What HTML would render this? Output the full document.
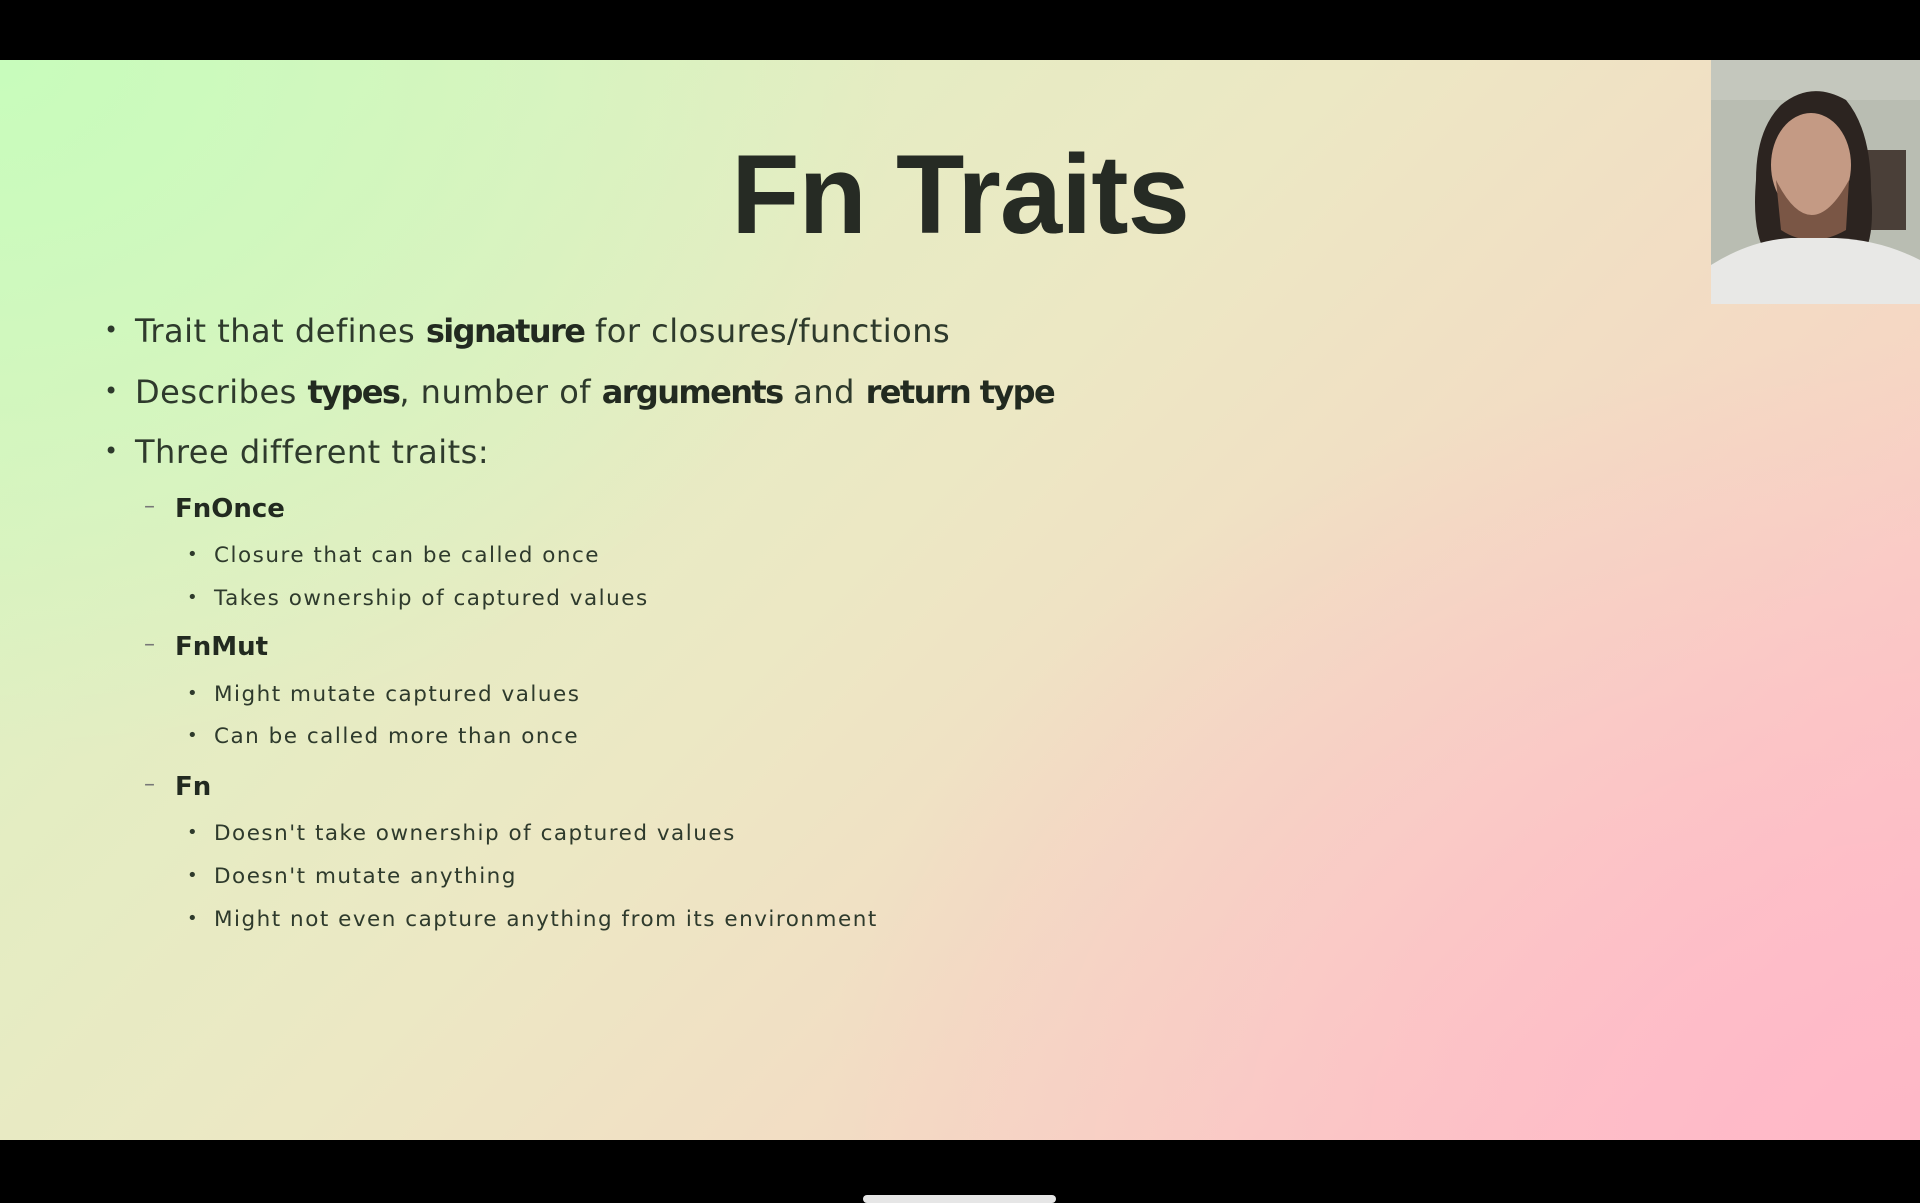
<!DOCTYPE html>
<html><head><meta charset="utf-8"><style>
html,body{margin:0;padding:0;width:1920px;height:1200px;background:#000;overflow:hidden;font-family:"DejaVu Sans","Liberation Sans",sans-serif;color:#2e3a2c}
#slide{position:absolute;left:0;top:60px;width:1920px;height:1080px;
background:
radial-gradient(ellipse 900px 700px at 0% 0%, rgba(200,252,188,1), rgba(200,252,188,0)),
radial-gradient(ellipse 1100px 800px at 100% 100%, rgba(255,184,200,1), rgba(255,188,200,0)),
linear-gradient(135deg,#d8f4c0 0%,#ece8c4 45%,#f6d6c4 75%,#ffc0c8 100%)}
.t{position:absolute;white-space:nowrap}
h1{position:absolute;margin:0;left:0;width:1920px;text-align:center;font-size:112px;font-weight:bold;color:#262b24;letter-spacing:-1px;font-family:"Liberation Sans","DejaVu Sans",sans-serif}
.l1{font-size:32px;left:135px;letter-spacing:0.5px}
.l1 b{letter-spacing:-1.6px}
.l2{font-size:26px;left:175px;font-weight:bold;color:#222a20}
.l3{font-size:21.5px;left:214px;letter-spacing:1.5px}
.b1{font-size:24px;left:104px}
.b3{font-size:18px;left:187px}
.d{font-size:22px;left:144px;color:#777}
b{font-weight:bold;color:#222a20}
#cam{position:absolute;left:1711px;top:60px;width:209px;height:244px;background:#b9bdb4;overflow:hidden}
#bar{position:absolute;left:863px;top:1195px;width:193px;height:8px;border-radius:4px;background:#e6e6e6}
</style></head><body>
<div id="slide"></div>
<h1 style="top:130px">Fn Traits</h1>
<div class="t b1" style="top:316px">•</div><div class="t l1" style="top:312px">Trait that defines <b>signature</b> for closures/functions</div>
<div class="t b1" style="top:377px">•</div><div class="t l1" style="top:373px">Describes <b>types</b>, number of <b>arguments</b> and <b>return type</b></div>
<div class="t b1" style="top:437px">•</div><div class="t l1" style="top:433px">Three different traits:</div>
<div class="t d" style="top:494px">–</div><div class="t l2" style="top:494px">FnOnce</div>
<div class="t b3" style="top:544px">•</div><div class="t l3" style="top:543px">Closure that can be called once</div>
<div class="t b3" style="top:587px">•</div><div class="t l3" style="top:586px">Takes ownership of captured values</div>
<div class="t d" style="top:632px">–</div><div class="t l2" style="top:632px">FnMut</div>
<div class="t b3" style="top:683px">•</div><div class="t l3" style="top:682px">Might mutate captured values</div>
<div class="t b3" style="top:725px">•</div><div class="t l3" style="top:724px">Can be called more than once</div>
<div class="t d" style="top:772px">–</div><div class="t l2" style="top:772px">Fn</div>
<div class="t b3" style="top:822px">•</div><div class="t l3" style="top:821px">Doesn't take ownership of captured values</div>
<div class="t b3" style="top:865px">•</div><div class="t l3" style="top:864px">Doesn't mutate anything</div>
<div class="t b3" style="top:908px">•</div><div class="t l3" style="top:907px">Might not even capture anything from its environment</div>
<div id="cam">
<svg width="209" height="244" viewBox="0 0 209 244">
<rect width="209" height="244" fill="#b9bdb2"/>
<rect x="0" y="0" width="209" height="40" fill="#c4c7bd"/>
<rect x="150" y="90" width="45" height="80" fill="#4a3f38"/>
<path d="M70 45 Q100 20 135 40 Q160 70 160 130 Q165 190 145 200 L60 200 Q40 180 45 120 Q45 70 70 45Z" fill="#2c2420"/>
<ellipse cx="100" cy="105" rx="40" ry="52" fill="#c49a84"/>
<path d="M65 120 Q100 190 138 120 L135 170 Q100 190 70 170Z" fill="#7a5645"/>
<path d="M0 244 L0 205 Q40 180 80 178 L125 178 Q170 180 209 200 L209 244Z" fill="#e8e8e6"/>
</svg></div>
<div id="bar"></div>
</body></html>
